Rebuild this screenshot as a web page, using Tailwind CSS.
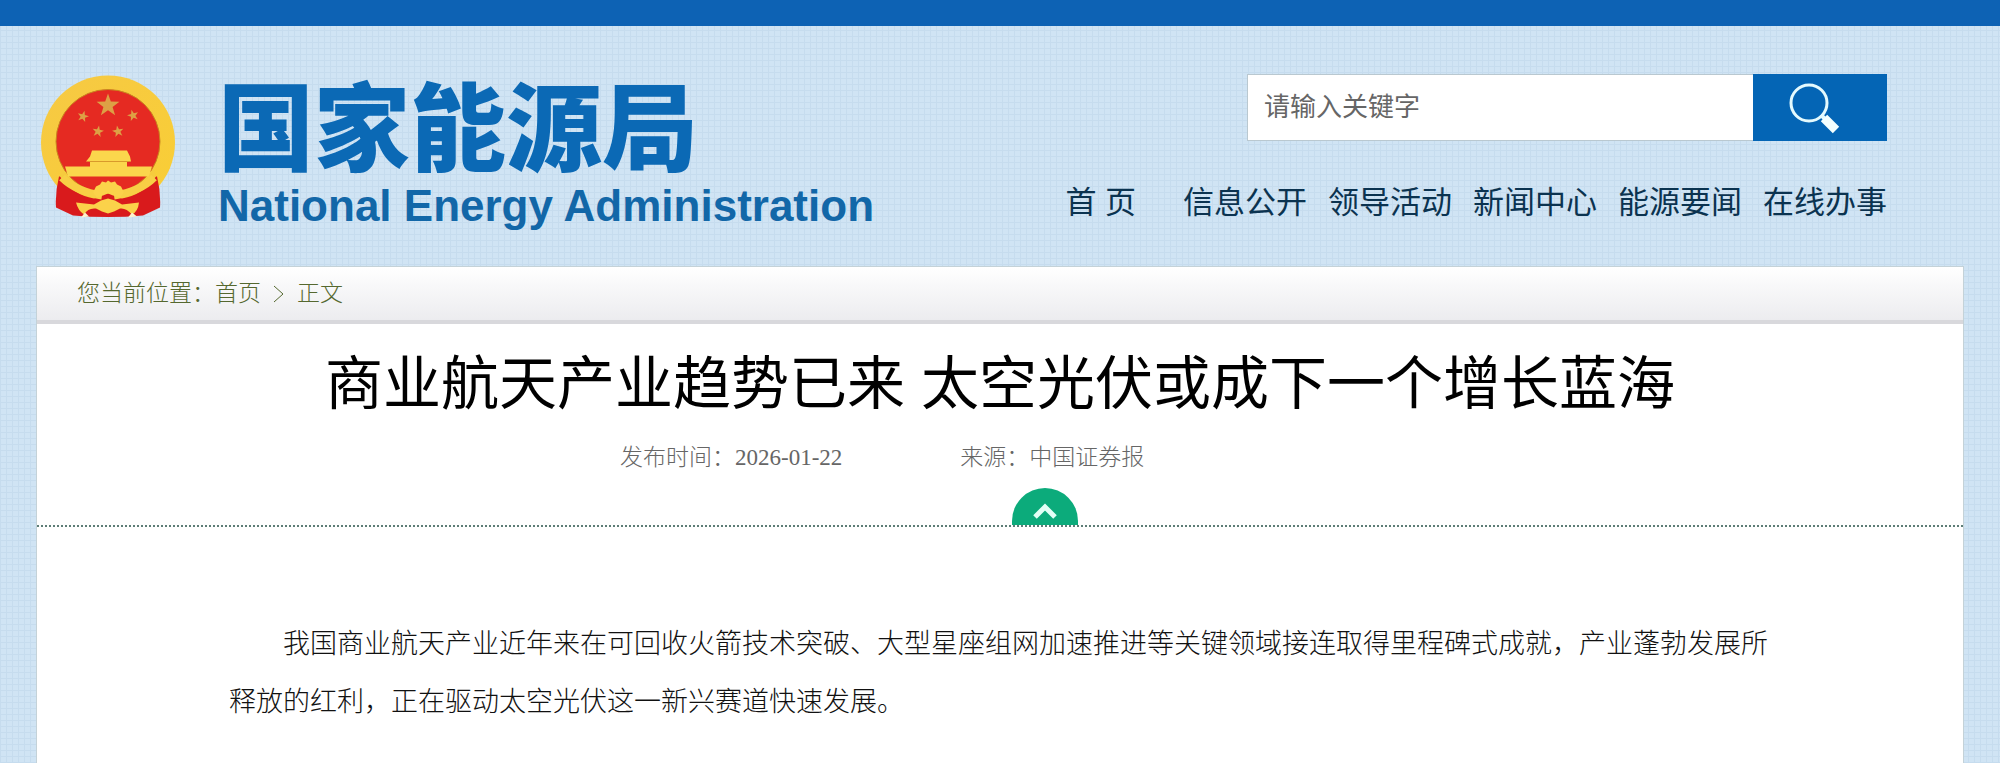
<!DOCTYPE html>
<html lang="zh-CN">
<head>
    <meta charset="UTF-8">
    <meta name="viewport" content="width=device-width, initial-scale=1.0">
    <title>国家能源局</title>
    <script src="https://cdn.jsdelivr.net/npm/@tailwindcss/browser@4"></script>
</head>
<body class="min-h-screen flex flex-col bg-[#d0e4f4] bg-[linear-gradient(#c6dcee_1px,transparent_1px),linear-gradient(90deg,#c6dcee_1px,transparent_1px)] bg-[size:6px_6px] font-['Liberation_Sans','Noto_Sans_CJK_SC',sans-serif]">
    <!-- Top bar -->
    <div class="h-[26px] bg-[#0d62b4]"></div>

    <!-- Header -->
    <header class="flex justify-between items-start pl-10 pr-[113px] pt-12 pb-8">
        <a href="#" class="flex items-start text-[#0b69b5]">
            <svg class="w-[136px] h-[144px] shrink-0" viewBox="0 0 136 143" aria-hidden="true">
                <defs>
                    <path id="star" d="M0-12 2.8-3.9 11.4-3.7 4.6 1.5 7.1 9.7 0 4.8-7.1 9.7-4.6 1.5-11.4-3.7-2.8-3.9Z" />
                    <linearGradient id="gold" x1="0" y1="0" x2="1" y2="1">
                        <stop offset="0" stop-color="#f6c944" />
                        <stop offset="1" stop-color="#f9ce35" />
                    </linearGradient>
                </defs>
                <!-- wreath and drape -->
                <circle cx="68" cy="68" r="67" fill="url(#gold)" />
                <path d="M19 102Q15 118 16 133L33 141Q68 144 103 141L120 133Q121 118 117 102Z" fill="#d91a1c" />
                <path d="M20 102Q32 120 54 124L68 118L82 124Q104 120 116 102L110 84H26Z" fill="#f6cb3d" />
                <circle cx="68" cy="67" r="52" fill="#e52a22" stroke="#c9861f" stroke-width="1" />
                <path d="M22 103Q36 117 62 121M114 103Q100 117 74 121" fill="none" stroke="#f8cf45" stroke-width="8" />
                <!-- stars -->
                <g fill="#dda045">
                    <use href="#star" x="68" y="31" />
                    <use href="#star" transform="translate(43 42) rotate(15) scale(.5)" />
                    <use href="#star" transform="translate(93 41) rotate(-15) scale(.5)" />
                    <use href="#star" transform="translate(58 57) rotate(10) scale(.5)" />
                    <use href="#star" transform="translate(78 57) rotate(-10) scale(.5)" />
                </g>
                <!-- gate -->
                <path d="M52 76H87L90 82L91 87H87V92H112L109 102H28L25 92H50V87H46L50 82Z" fill="#fbd64c" />
                <path d="M49 87H89" stroke="#d99a2b" stroke-width="1" />
                <!-- gear and knot -->
                <path d="M53 118L56 112L60 110L62 107L66 108L68 106L71 108L75 107L77 110L81 112L84 118L80 123L73 121L68 119L63 121L57 123Z" fill="#fbd24a" />
                <path d="M36 128L54 130L61 126L68 124L75 126L82 130L99 128Q98 137 92 140Q86 133 80 134L74 137L68 139L62 137L56 134Q48 133 44 140Q38 136 36 128Z" fill="#fbd24a" />
                <path d="M41 143L45 138L49 142M88 143L92 138L97 142" fill="#fdf3d0" />
            </svg>
            <span class="ml-[42px] pt-1">
                <span class="block text-[96px] leading-[104px] font-black">国家能源局</span>
                <span class="block text-[44px] leading-[48px] font-bold text-[#1267a8]">National Energy Administration</span>
            </span>
        </a>

        <div class="flex flex-col items-end text-[#0b3350]">
            <form class="flex w-[640px] h-[67px]" onsubmit="return false">
                <input type="search" aria-label="关键字" placeholder="请输入关键字" class="flex-1 min-w-0 bg-white border border-r-0 border-[#b9c8d0] px-4 text-[26px] text-gray-700 placeholder:text-[#666] outline-none">
                <button type="submit" aria-label="搜索" class="w-[134px] bg-[#0465b5] flex items-center justify-center">
                    <svg class="w-[54px] h-[54px] mr-3" viewBox="0 0 54 54" fill="none" stroke="#e4fafe" aria-hidden="true">
                        <circle cx="22" cy="22" r="18" stroke-width="3" />
                        <path d="M34 34L38 38" stroke-width="4" />
                        <path d="M37 37L49 49" stroke-width="9" stroke="#f4ffff" />
                    </svg>
                </button>
            </form>
            <nav class="flex gap-[21px] mt-[38px] text-[31px] leading-[48px] whitespace-nowrap">
                <a href="#" class="mr-[26px]">首 页</a>
                <a href="#">信息公开</a>
                <a href="#">领导活动</a>
                <a href="#">新闻中心</a>
                <a href="#">能源要闻</a>
                <a href="#">在线办事</a>
            </nav>
        </div>
    </header>

    <!-- Article -->
    <main class="flex-1 mx-9 mt-1 bg-white border border-b-0 border-[#c4d2d8]">
        <nav class="flex items-center h-[57px] pl-10 bg-linear-to-b from-white to-[#ececef] border-b-4 border-[#d8d8dc] text-[23px] font-light text-[#55682f]">
            <span>您当前位置：</span>
            <a href="#">首页</a>
            <svg class="w-3 h-5 mx-3" viewBox="0 0 12 20" fill="none" stroke="#55682f" aria-hidden="true">
                <path d="M1 2L10 10L1 18" />
            </svg>
            <span>正文</span>
        </nav>

        <h1 class="pt-4 text-center text-[58px] leading-[88px] text-black">商业航天产业趋势已来 太空光伏或成下一个增长蓝海</h1>

        <div class="flex gap-[118px] pl-[583px] pt-[10px] text-[23px] leading-[40px] font-light text-[#666] font-['Liberation_Serif','Noto_Sans_CJK_SC',serif]">
            <span>发布时间：2026-01-22</span>
            <span>来源：中国证券报</span>
        </div>

        <div class="flex pl-[975px] pt-[10px] border-b-2 border-dotted border-[#5d7d76]">
            <button type="button" aria-label="收起" class="w-[66px] h-[37px] rounded-t-full bg-[#0cab7b] flex items-center justify-center pt-2">
                <svg class="w-6 h-5" viewBox="0 0 24 20" fill="none" stroke="#e2fff6" stroke-width="5" aria-hidden="true">
                    <path d="M2 16L12 6L22 16" />
                </svg>
            </button>
        </div>

        <article class="pl-48 pr-[194px] pt-[88px] text-[27px] leading-[58px] font-light text-[#111]">
            <p class="indent-[54px]">我国商业航天产业近年来在可回收火箭技术突破、大型星座组网加速推进等关键领域接连取得里程碑式成就，产业蓬勃发展所释放的红利，正在驱动太空光伏这一新兴赛道快速发展。</p>
        </article>
    </main>
</body>
</html>
